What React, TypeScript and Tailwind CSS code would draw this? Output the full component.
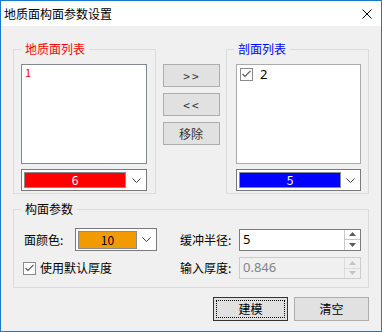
import React from "react";

function Chevron() {
  return (
    <svg width="9" height="5" viewBox="0 0 9 5" className="text-[#404040]">
      <path d="M0.5 0.5 L4.5 4.5 L8.5 0.5" fill="none" stroke="currentColor" strokeWidth="1" />
    </svg>
  );
}

function Check() {
  return (
    <div className="w-[13px] h-[13px] border border-[#8a8a8a] bg-white flex items-center justify-center">
      <svg width="9" height="8" viewBox="0 0 9 8">
        <path d="M0.5 4 L3 6.5 L8.5 0.8" fill="none" stroke="#555" strokeWidth="1.2" />
      </svg>
    </div>
  );
}

function ColorCombo({ color, value, width, rectW, rectH, textColor }: { color: string; value: string; width: string; rectW: string; rectH: string; textColor: string }) {
  return (
    <div className={`${width} h-full border border-[#7a7a7a] bg-white flex items-center pl-[2px]`}>
      <div className={`${rectW} ${rectH} border border-[#8a8a8a] ${color} ${textColor} flex items-center justify-center leading-none`}>
        {value}
      </div>
      <div className="flex-1 flex items-center justify-center">
        <Chevron />
      </div>
    </div>
  );
}

function Spinner({ value, disabled }: { value: string; disabled?: boolean }) {
  const arrow = disabled ? "#c4c4c4" : "#5a5a5a";
  return (
    <div className={`w-[122px] h-[22px] border flex ${disabled ? "border-[#cccccc] bg-[#f0f0f0] text-[#838383]" : "border-[#7a7a7a] bg-white text-black"}`}>
      <div className="flex-1 pl-[3px] flex items-center font-['Noto_Sans',sans-serif] text-[13px]">{value}</div>
      <div className={`w-[16px] flex flex-col border-l ${disabled ? "border-[#dcdcdc]" : "border-[#c8c8c8]"}`}>
        <div className="flex-1 flex items-center justify-center">
          <svg width="7" height="4" viewBox="0 0 7 4"><path d="M0 4 L3.5 0 L7 4 Z" fill={arrow} /></svg>
        </div>
        <div className={`flex-1 flex items-center justify-center border-t ${disabled ? "border-[#dcdcdc]" : "border-[#c8c8c8]"}`}>
          <svg width="7" height="4" viewBox="0 0 7 4"><path d="M0 0 L3.5 4 L7 0 Z" fill={arrow} /></svg>
        </div>
      </div>
    </div>
  );
}

export default function App() {
  return (
    <div className="w-[382px] h-[332px] border border-[#1979ca] bg-[#f0f0f0] flex flex-col text-[12px] text-black font-['Noto_Sans_CJK_SC',sans-serif]">
      {/* Title bar */}
      <div className="h-[25px] bg-white flex items-center justify-between pl-[3px] pr-[9px]">
        <span className="leading-none">地质面构面参数设置</span>
        <svg width="10" height="10" viewBox="0 0 10 10">
          <path d="M0.5 0.5 L9.5 9.5 M9.5 0.5 L0.5 9.5" stroke="#000" strokeWidth="1" />
        </svg>
      </div>

      <div className="px-[12px] pt-[15px]">
        {/* Top row */}
        <div className="flex justify-between items-start">
          <fieldset className="w-[143px] h-[153px] border border-[#dcdcdc] pl-[7px]">
            <legend className="px-[4px] leading-[16px] text-[#ff0000]">地质面列表</legend>
            <div className="mt-[7px] w-[126px] h-[100px] border border-[#828790] bg-white pl-[3px] pt-[1px] text-[11px] leading-[13px] text-[#ff0000]">
              1
            </div>
            <div className="mt-[5px] h-[22px]">
              <ColorCombo color="bg-[#ff0000]" value="6" width="w-[126px]" rectW="w-[102px]" rectH="h-[16px]" textColor="text-white" />
            </div>
          </fieldset>

          <div className="mt-[23px] w-[57px] flex flex-col gap-[6px] text-[#333]">
            <button className="h-[23px] border border-[#adadad] bg-[#e1e1e1] tracking-[2px] pl-[2px]">&gt;&gt;</button>
            <button className="h-[23px] border border-[#adadad] bg-[#e1e1e1] tracking-[2px] pl-[2px]">&lt;&lt;</button>
            <button className="h-[23px] border border-[#adadad] bg-[#e1e1e1]">移除</button>
          </div>

          <fieldset className="w-[143px] h-[153px] border border-[#dcdcdc] pl-[7px]">
            <legend className="px-[4px] leading-[16px] text-[#0000ff]">剖面列表</legend>
            <div className="mt-[7px] ml-[2px] w-[125px] h-[100px] border border-[#ababab] bg-white pl-[3px] pt-[2px]">
              <div className="flex items-center gap-[7px]">
                <Check />
                <span className="font-['Noto_Sans',sans-serif] text-[13px] leading-[14px]">2</span>
              </div>
            </div>
            <div className="mt-[5px] ml-[2px] h-[22px]">
              <ColorCombo color="bg-[#0000ff]" value="5" width="w-[125px]" rectW="w-[102px]" rectH="h-[16px]" textColor="text-white" />
            </div>
          </fieldset>
        </div>

        {/* Parameters group */}
        <fieldset className="mt-[7px] h-[87px] border border-[#dcdcdc] pl-[7px]">
          <legend className="px-[4px] leading-[16px]">构面参数</legend>
          <div className="mt-[11px] pl-[3px] flex items-center h-[23px]">
            <div className="w-[156px] flex items-center h-full">
              <span className="w-[51px]">面颜色:</span>
              <ColorCombo color="bg-[#f29b00]" value="10" width="w-[82px]" rectW="w-[59px]" rectH="h-[18px]" textColor="text-black" />
            </div>
            <span className="w-[59px]">缓冲半径:</span>
            <Spinner value="5" />
          </div>
          <div className="mt-[6px] pl-[2px] flex items-center h-[22px]">
            <div className="w-[157px] flex items-center gap-[4px]">
              <Check />
              <span>使用默认厚度</span>
            </div>
            <span className="w-[59px]">输入厚度:</span>
            <Spinner value="0.846" disabled />
          </div>
        </fieldset>

        {/* Bottom buttons */}
        <div className="mt-[9px] flex justify-end gap-[6px]">
          <button className="w-[75px] h-[24px] border border-[#333] bg-[#e1e1e1] p-[2px]">
            <div className="w-full h-full border border-dotted border-black flex items-center justify-center">建模</div>
          </button>
          <button className="w-[75px] h-[24px] border border-[#adadad] bg-[#e1e1e1]">清空</button>
        </div>
      </div>
    </div>
  );
}
